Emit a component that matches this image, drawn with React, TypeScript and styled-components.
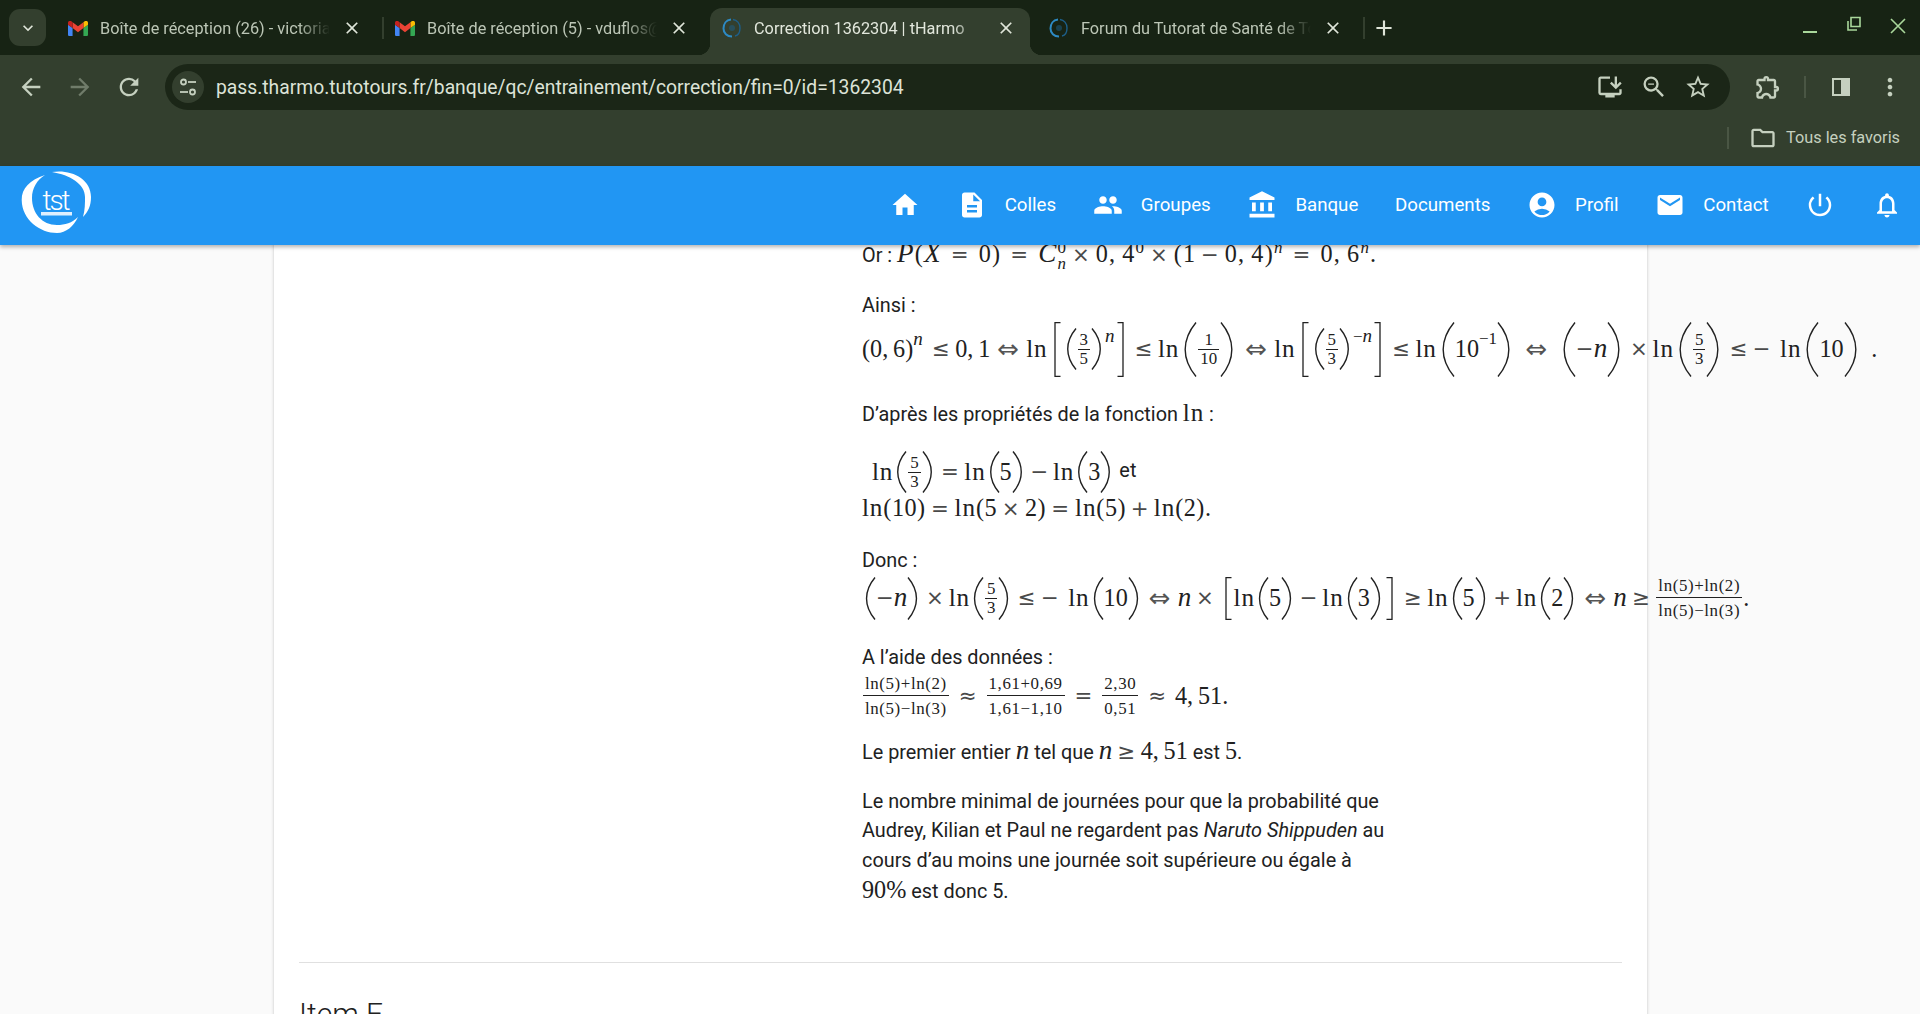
import React from "react";
import styled, { createGlobalStyle } from "styled-components";
import {
  MdAccountBalance,
  MdAccountCircle,
  MdAdd,
  MdArrowBack,
  MdArrowForward,
  MdClose,
  MdDescription,
  MdEmail,
  MdExpandMore,
  MdHome,
  MdInstallDesktop,
  MdMoreVert,
  MdNotificationsNone,
  MdOutlineExtension,
  MdOutlineFolder,
  MdPeople,
  MdPowerSettingsNew,
  MdRefresh,
  MdStarBorder,
  MdZoomOut,
} from "react-icons/md";

const GlobalStyle = createGlobalStyle`
  html, body {
    margin: 0;
    padding: 0;
    height: 100%;
    overflow: hidden;
    font-family: Roboto, "Liberation Sans", sans-serif;
    color: #212121;
  }
`;

const Page = styled.div`
  display: flex;
  flex-direction: column;
  height: 1014px;
  overflow: hidden;
`;

/* ---------- browser chrome ---------- */

const TabStrip = styled.div`
  display: flex;
  align-items: flex-end;
  height: 55px;
  background: #172314;
  padding-left: 9px;
  color: #c6d0c0;
`;

const TabSearch = styled.div`
  display: flex;
  align-items: center;
  justify-content: center;
  width: 37px;
  height: 37px;
  margin: 0 10px 9px 0;
  border-radius: 11px;
  background: #333f2e;
  font-size: 20px;
  color: #e0e6da;
`;

const Tab = styled.div<{ $active?: boolean; $divider?: boolean }>`
  position: relative;
  display: flex;
  align-items: center;
  width: ${(p) => (p.$active ? 320 : 327)}px;
  height: 47px;
  margin-right: ${(p) => (p.$active ? 7 : 0)}px;
  padding: 0 ${(p) => (p.$active ? 14 : 21)}px 7px 12px;
  box-sizing: border-box;
  border-radius: 12px 12px 0 0;
  background: ${(p) => (p.$active ? "#333f2e" : "transparent")};
  color: ${(p) => (p.$active ? "#e2e7dc" : "#bcc6b6")};
  flex-shrink: 0;

  &::after {
    content: "";
    display: ${(p) => (p.$divider ? "block" : "none")};
    position: absolute;
    right: -1px;
    top: 9px;
    height: 22px;
    width: 2px;
    background: #333f2e;
  }

  ${(p) =>
    p.$active &&
    `
    &::before {
      content: "";
      position: absolute;
      left: -12px;
      bottom: 0;
      width: 12px;
      height: 12px;
      background: radial-gradient(circle at 0 0, transparent 12px, #333f2e 12.5px);
    }
    &::after {
      display: block;
      right: -12px;
      top: auto;
      bottom: 0;
      width: 12px;
      height: 12px;
      background: radial-gradient(circle at 100% 0, transparent 12px, #333f2e 12.5px);
    }
  `}
`;

const TabIcon = styled.span`
  display: flex;
  width: 20px;
  margin-right: 12px;
  flex-shrink: 0;
`;

const TabTitle = styled.span`
  flex: 1;
  font-size: 16.3px;
  white-space: nowrap;
  overflow: hidden;
  mask-image: linear-gradient(to right, #000 86%, transparent 100%);
`;

const TabClose = styled.span`
  display: flex;
  margin-left: 12px;
  font-size: 20px;
  color: #e0e6da;
`;

const NewTab = styled.span`
  display: flex;
  margin: 0 0 9px 7px;
  height: 37px;
  align-items: center;
  font-size: 26px;
  color: #dfe5d9;
`;

const WindowControls = styled.div`
  display: flex;
  margin: 0 14px 0 auto;
  align-self: flex-start;
  gap: 28px;
  padding-top: 16px;
  color: #a9d79b;
`;

const Toolbar = styled.div`
  display: flex;
  align-items: center;
  height: 62px;
  padding: 2px 0 0 14px;
  box-sizing: border-box;
  background: #333f2e;
  color: #c5d0bf;
`;

const NavButton = styled.span<{ $dim?: boolean }>`
  display: flex;
  justify-content: center;
  width: 34px;
  margin-right: 15px;
  font-size: 28px;
  color: ${(p) => (p.$dim ? "#707c6a" : "#c5d0bf")};
`;

const Omnibox = styled.div`
  display: flex;
  align-items: center;
  width: 1565px;
  height: 46px;
  margin-left: 4px;
  padding: 0 10px 0 2px;
  box-sizing: border-box;
  border-radius: 23px;
  background: #1b2617;
`;

const SiteInfo = styled.span`
  display: flex;
  align-items: center;
  justify-content: center;
  width: 32px;
  height: 32px;
  margin: 0 12px 0 5px;
  border-radius: 50%;
  background: #333f2e;
`;

const Url = styled.span`
  flex: 1;
  font-size: 19.3px;
  color: #dde3d7;
`;

const OmniAction = styled.span`
  display: flex;
  justify-content: center;
  width: 44px;
  font-size: 28px;
  color: #c5d0bf;
`;

const ToolButton = styled.span<{ $left: number }>`
  display: flex;
  justify-content: center;
  margin-left: ${(p) => p.$left}px;
  font-size: 28px;
  color: #c5d0bf;
`;

const ToolDivider = styled.span<{ $left?: number }>`
  width: 2px;
  height: 22px;
  margin-left: ${(p) => p.$left ?? 0}px;
  background: #4a5644;
`;

const BookmarkBar = styled.div`
  display: flex;
  align-items: center;
  justify-content: flex-end;
  height: 49px;
  padding: 0 20px 8px 0;
  box-sizing: border-box;
  background: #333f2e;
  color: #c5d0bf;
  font-size: 16.3px;
`;

const FolderIcon = styled.span`
  display: flex;
  margin: 0 9px 0 20px;
  font-size: 28px;
`;

/* ---------- site header ---------- */

const AppBar = styled.header`
  position: relative;
  z-index: 2;
  display: flex;
  align-items: center;
  height: 79px;
  flex-shrink: 0;
  padding: 0 18px 2px 20px;
  box-sizing: border-box;
  background: #2196f3;
  color: #fff;
  box-shadow: 0 2px 4px rgba(0, 0, 0, 0.3);
`;

const Logo = styled.svg`
  display: block;
  margin-top: -5px;
`;

const NavList = styled.nav`
  display: flex;
  align-items: center;
  gap: 36.7px;
  margin-left: auto;
`;

const NavItem = styled.a`
  display: flex;
  align-items: center;
  gap: 18px;
  font-size: 18.7px;
  color: #fff;

  svg {
    display: block;
    width: 30px;
    height: 30px;
  }
`;

/* ---------- page content ---------- */

const Viewport = styled.main`
  flex: 1;
  overflow: hidden;
  background: #fafafa;
`;

const Card = styled.div`
  width: 1373px;
  margin-left: 274px;
  padding: 0 25px;
  box-sizing: border-box;
  background: #fff;
  box-shadow: 0 0 3px rgba(0, 0, 0, 0.22);
`;

const Answer = styled.div`
  display: flex;
  flex-direction: column;
  width: 530px;
  margin-left: 563px;
  margin-top: -7px;
  font-size: 19.85px;
`;

const Para = styled.div<{ $top?: number }>`
  margin-top: ${(p) => p.$top ?? 0}px;
  line-height: 29.6px;
`;

const Line = styled.div<{ $indent?: number }>`
  line-height: 30px;
  white-space: nowrap;
  padding-left: ${(p) => p.$indent ?? 0}px;
`;

const Divider = styled.hr`
  margin: 55.5px 0 0;
  border: 0;
  border-top: 1px solid #e0e0e0;
`;

const ItemTitle = styled.h2`
  margin: 33px 0 0;
  font-size: 30px;
  font-weight: 300;
  line-height: 36px;
  color: #212121;
`;

/* ---------- maths ---------- */

const Inline = styled.span<{ $track?: number }>`
  font-family: "Liberation Serif", "DejaVu Serif", serif;
  font-size: 24.2px;
  letter-spacing: ${(p) => p.$track ?? 0}px;
  white-space: nowrap;
`;

const Display = styled.div<{ $h: number }>`
  display: flex;
  align-items: center;
  height: ${(p) => p.$h}px;
  font-family: "Liberation Serif", "DejaVu Serif", serif;
  font-size: 24.2px;
  line-height: 1;
  white-space: nowrap;
`;

const Group = styled.span`
  display: inline-flex;
  align-items: center;
  font-family: "Liberation Serif", "DejaVu Serif", serif;
  font-size: 24.2px;
  line-height: 1;
  vertical-align: middle;
`;

const Ln = styled.span`
  font-size: 1.04em;
  letter-spacing: 0.035em;
`;

const V = styled.i`
  font-size: 1.12em;
`;

const Rel = styled.span<{ $space?: number }>`
  margin: 0 ${(p) => p.$space ?? 0.25}em;
  font-family: "DejaVu Sans", sans-serif;
  font-size: 0.88em;
  color: #4a4a4a;
`;

const Bin = styled.span`
  margin: 0 0.222em;
  font-family: "DejaVu Sans", sans-serif;
  font-size: 0.88em;
  color: #4a4a4a;
`;

const Unary = styled.span`
  font-family: "DejaVu Sans", sans-serif;
  font-size: 0.88em;
  color: #4a4a4a;
`;

const Arrow = styled.span<{ $wide?: boolean }>`
  margin: 0 ${(p) => (p.$wide ? "0.4em" : "0.27em")};
  font-family: "DejaVu Sans", sans-serif;
  font-size: 1.08em;
  color: #555;
`;

const Period = styled.span`
  margin-left: 0.4em;
`;

const Sup = styled.span<{ $lift?: number; $gap?: number }>`
  font-size: 0.7em;
  margin-bottom: ${(p) => p.$lift ?? 20}px;
  margin-right: ${(p) => p.$gap ?? 0}px;
`;

const InlineSup = styled.sup`
  font-size: 0.7em;
  line-height: 0;
`;

const Stack = styled.span`
  display: inline-flex;
  flex-direction: column;
  vertical-align: middle;
  font-size: 0.7em;
  line-height: 0.95;
`;

const Frac = styled.span<{ $loose?: boolean }>`
  display: inline-flex;
  flex-direction: column;
  align-items: stretch;
  margin: 0 1px;
  text-align: center;
  font-size: 16.9px;
  letter-spacing: ${(p) => (p.$loose ? "0.6px" : "0")};
  line-height: ${(p) => (p.$loose ? "19px" : "16px")};
`;

const FracTop = styled.span<{ $loose?: boolean }>`
  padding: 0 2px ${(p) => (p.$loose ? "2px" : "1px")};
  border-bottom: 1px solid #212121;
`;

const FracBottom = styled.span<{ $loose?: boolean }>`
  padding: ${(p) => (p.$loose ? "3px" : "1px")} 2px 0;
`;

const DelimSvg = styled.svg<{ $flip?: boolean }>`
  display: block;
  flex-shrink: 0;
  transform: ${(p) => (p.$flip ? "scaleX(-1)" : "none")};
`;

function Paren({ h, close }: { h: number; close?: boolean }) {
  const w = Math.round(h * 0.33);
  const inner = h * 0.24;
  const x0 = w - 1;
  const xm = x0 - inner * 0.82;
  return (
    <DelimSvg $flip={close} width={w} height={h} viewBox={`0 0 ${w} ${h}`}>
      <path
        d={`M${x0} 0.5 C${xm + inner * 0.16} ${h * 0.2} ${xm} ${h * 0.36} ${xm} ${h / 2} C${xm} ${h * 0.64} ${xm + inner * 0.16} ${h * 0.8} ${x0} ${h - 0.5}`}
        fill="none"
        stroke="#212121"
        strokeWidth="1.4"
      />
    </DelimSvg>
  );
}

function Bracket({ h, close }: { h: number; close?: boolean }) {
  return (
    <DelimSvg $flip={close} width={15} height={h} viewBox={`0 0 15 ${h}`}>
      <path d={`M12.5 0.7 H7 V${h - 0.7} H12.5`} fill="none" stroke="#212121" strokeWidth="1.3" />
    </DelimSvg>
  );
}

function Fraction({ top, bottom, loose }: { top: React.ReactNode; bottom: React.ReactNode; loose?: boolean }) {
  return (
    <Frac $loose={loose}>
      <FracTop $loose={loose}>{top}</FracTop>
      <FracBottom $loose={loose}>{bottom}</FracBottom>
    </Frac>
  );
}

/* ---------- small drawings ---------- */

function Gmail() {
  return (
    <svg width="20" height="15" viewBox="0 0 24 18">
      <path fill="#4285f4" d="M1.6 18H5.5V8.5L0 4.4V16.4C0 17.3.7 18 1.6 18z" />
      <path fill="#34a853" d="M18.5 18h3.9c.9 0 1.6-.7 1.6-1.6V4.4l-5.5 4.1z" />
      <path fill="#fbbc04" d="M18.5 1.4v7.1L24 4.4V2.2c0-2-2.3-3.2-3.9-2z" />
      <path fill="#ea4335" d="M5.5 8.5V1.4L12 6.3l6.5-4.9v7.1L12 13.4z" />
      <path fill="#c5221f" d="M0 2.2v2.2l5.5 4.1V1.4L3.9.2C2.3-1 0 .2 0 2.2z" />
    </svg>
  );
}

function TutoFavicon() {
  return (
    <svg width="20" height="20" viewBox="0 0 20 20" fill="none">
      <path d="M9 1.5C4 2 1.5 6 1.5 10.5S5 18.5 10 18.5" stroke="#2d8ac4" strokeWidth="2" />
      <path d="M11 1.5c4 .4 7 3.800 7 8.500s-2.500 7.500-5 8" stroke="#1d5f8a" strokeWidth="1.4" />
      <circle cx="10" cy="10" r="3" fill="#1d5f8a" opacity="0.5" />
    </svg>
  );
}

function TuneIcon() {
  return (
    <svg width="20" height="20" viewBox="0 0 20 20" fill="none" stroke="#c5d0bf" strokeWidth="1.8">
      <circle cx="5.500" cy="5" r="2.500" />
      <path d="M10 5h8" />
      <circle cx="14.500" cy="15" r="2.500" />
      <path d="M2 15h8" />
    </svg>
  );
}

function SidePanelIcon() {
  return (
    <svg width="20" height="20" viewBox="0 0 20 20">
      <path fill="#c5d0bf" fillRule="evenodd" d="M1 1h18v18H1zM3 3v14h7V3z" />
    </svg>
  );
}

function WindowMin() {
  return (
    <svg width="16" height="20" viewBox="0 0 16 20">
      <path d="M1 16h14" stroke="currentColor" strokeWidth="2" />
    </svg>
  );
}

function WindowRestore() {
  return (
    <svg width="16" height="20" viewBox="0 0 16 20" fill="none" stroke="currentColor" strokeWidth="1.6">
      <path d="M5 1.500h9v9H5z" />
      <path d="M2 5v9h9" />
    </svg>
  );
}

function WindowClose() {
  return (
    <svg width="16" height="20" viewBox="0 0 16 20" fill="none" stroke="currentColor" strokeWidth="1.6">
      <path d="M1 3l14 14M15 3L1 17" />
    </svg>
  );
}

function TstLogo() {
  return (
    <Logo width="72" height="64" viewBox="0 0 72 64">
      <path fill="#fff" d="M25 5C10 10 1.500 18 1.700 30 2 50 20 63 37 63 46 63 54 56 58 47 52 53 45 55 37 55 22 55 12 43 12 28 12 18 17 10 25 5z" />
      <path fill="#fff" d="M32 2C50-1 71 8 71 27 71 36 68 42 63 47 65 40 65 33 65 27 65 14 50 5 32 2z" />
      <text x="35.500" y="40" textAnchor="middle" fill="#fff" fontFamily="Roboto, sans-serif" fontWeight="300" fontSize="28" letterSpacing="-2">
        tst
      </text>
      <rect x="21" y="42" width="31" height="3.500" fill="#fff" opacity="0.85" />
    </Logo>
  );
}

const tabs = [
  { title: "Boîte de réception (26) - victoria.duflos", icon: <Gmail />, divider: true },
  { title: "Boîte de réception (5) - vduflos@gmail", icon: <Gmail /> },
  { title: "Correction 1362304 | tHarmo", icon: <TutoFavicon />, active: true },
  { title: "Forum du Tutorat de Santé de Tours", icon: <TutoFavicon />, divider: true },
];

const navItems = [
  { label: "", icon: <MdHome /> },
  { label: "Colles", icon: <MdDescription /> },
  { label: "Groupes", icon: <MdPeople /> },
  { label: "Banque", icon: <MdAccountBalance /> },
  { label: "Documents" },
  { label: "Profil", icon: <MdAccountCircle /> },
  { label: "Contact", icon: <MdEmail /> },
  { label: "", icon: <MdPowerSettingsNew /> },
  { label: "", icon: <MdNotificationsNone /> },
];

// decimal comma as KaTeX sets it, with a thin space after it
const dec = (a: string, b: string) => `${a},\u2009${b}`;

const ln = <Ln>ln</Ln>;

export default function App() {
  return (
    <Page>
      <GlobalStyle />
      <TabStrip>
        <TabSearch>
          <MdExpandMore />
        </TabSearch>
        {tabs.map((t) => (
          <Tab key={t.title} $active={t.active} $divider={t.divider}>
            <TabIcon>{t.icon}</TabIcon>
            <TabTitle>{t.title}</TabTitle>
            <TabClose>
              <MdClose />
            </TabClose>
          </Tab>
        ))}
        <NewTab>
          <MdAdd />
        </NewTab>
        <WindowControls>
          <WindowMin />
          <WindowRestore />
          <WindowClose />
        </WindowControls>
      </TabStrip>

      <Toolbar>
        <NavButton>
          <MdArrowBack />
        </NavButton>
        <NavButton $dim>
          <MdArrowForward />
        </NavButton>
        <NavButton>
          <MdRefresh />
        </NavButton>
        <Omnibox>
          <SiteInfo>
            <TuneIcon />
          </SiteInfo>
          <Url>pass.tharmo.tutotours.fr/banque/qc/entrainement/correction/fin=0/id=1362304</Url>
          <OmniAction>
            <MdInstallDesktop />
          </OmniAction>
          <OmniAction>
            <MdZoomOut />
          </OmniAction>
          <OmniAction>
            <MdStarBorder />
          </OmniAction>
        </Omnibox>
        <ToolButton $left={24}>
          <MdOutlineExtension />
        </ToolButton>
        <ToolDivider $left={22} />
        <ToolButton $left={25}>
          <SidePanelIcon />
        </ToolButton>
        <ToolButton $left={25}>
          <MdMoreVert />
        </ToolButton>
      </Toolbar>

      <BookmarkBar>
        <ToolDivider />
        <FolderIcon>
          <MdOutlineFolder />
        </FolderIcon>
        Tous les favoris
      </BookmarkBar>

      <AppBar>
        <TstLogo />
        <NavList>
          {navItems.map((n, i) => (
            <NavItem key={i}>
              {n.icon}
              {n.label && <span>{n.label}</span>}
            </NavItem>
          ))}
        </NavList>
      </AppBar>

      <Viewport>
        <Card>
          <Answer>
            <Para>
              <Line>
                Or :{" "}
                <Inline $track={1.2}>
                  <V>P</V>(<V>X</V>
                  <Rel $space={0.42}>=</Rel>0)<Rel $space={0.42}>=</Rel>
                  <V>C</V>
                  <Stack>
                    <span>0</span>
                    <i>n</i>
                  </Stack>
                  <Bin>×</Bin>
                  {dec("0", "4")}
                  <InlineSup>0</InlineSup>
                  <Bin>×</Bin>(1<Bin>−</Bin>
                  {dec("0", "4")})<InlineSup><i>n</i></InlineSup>
                  <Rel $space={0.42}>=</Rel>
                  {dec("0", "6")}
                  <InlineSup><i>n</i></InlineSup>.
                </Inline>
              </Line>
            </Para>

            <Para $top={18.5}>
              <Line>Ainsi :</Line>
              <Display $h={56}>
                ({dec("0", "6")})<Sup $gap={4}><V>n</V></Sup>
                <Rel>≤</Rel>
                {dec("0", "1")}
                <Arrow>⇔</Arrow>
                {ln}
                <Bracket h={55} />
                <Paren h={42} />
                <Fraction top="3" bottom="5" />
                <Paren h={42} close />
                <Sup $lift={26}><V>n</V></Sup>
                <Bracket h={55} close />
                <Rel>≤</Rel>
                {ln}
                <Paren h={55} />
                <Fraction top="1" bottom="10" />
                <Paren h={55} close />
                <Arrow>⇔</Arrow>
                {ln}
                <Bracket h={55} />
                <Paren h={42} />
                <Fraction top="5" bottom="3" />
                <Paren h={42} close />
                <Sup $lift={26}>−<V>n</V></Sup>
                <Bracket h={55} close />
                <Rel>≤</Rel>
                {ln}
                <Paren h={55} />
                10<Sup>−1</Sup>
                <Paren h={55} close />
                <Arrow $wide>⇔</Arrow>
                <Paren h={55} />
                <Unary>−</Unary>
                <V>n</V>
                <Paren h={55} close />
                <Bin>×</Bin>
                {ln}
                <Paren h={55} />
                <Fraction top="5" bottom="3" />
                <Paren h={55} close />
                <Rel>≤</Rel>
                <Unary>−</Unary>
                <Bin />
                {ln}
                <Paren h={55} />
                10
                <Paren h={55} close />
                <Period>.</Period>
              </Display>
            </Para>

            <Para $top={21}>
              <Line>
                D’après les propriétés de la fonction <Inline>{ln}</Inline> :
              </Line>
            </Para>

            <Para $top={21}>
              <Line $indent={10}>
                <Group>
                  {ln}
                  <Paren h={42} />
                  <Fraction top="5" bottom="3" />
                  <Paren h={42} close />
                  <Rel>=</Rel>
                  {ln}
                  <Paren h={42} />5<Paren h={42} close />
                  <Bin>−</Bin>
                  {ln}
                  <Paren h={42} />3<Paren h={42} close />
                </Group>{" "}
                et
              </Line>
              <Line>
                <Inline $track={0.5}>
                  {ln}(10)<Rel>=</Rel>
                  {ln}(5<Bin>×</Bin>2)<Rel>=</Rel>
                  {ln}(5)<Bin>+</Bin>
                  {ln}(2).
                </Inline>
              </Line>
            </Para>

            <Para $top={21}>
              <Line>Donc :</Line>
              <Display $h={44}>
                <Paren h={43} />
                <Unary>−</Unary>
                <V>n</V>
                <Paren h={43} close />
                <Bin>×</Bin>
                {ln}
                <Paren h={43} />
                <Fraction top="5" bottom="3" />
                <Paren h={43} close />
                <Rel>≤</Rel>
                <Unary>−</Unary>
                <Bin />
                {ln}
                <Paren h={43} />
                10
                <Paren h={43} close />
                <Arrow>⇔</Arrow>
                <V>n</V>
                <Bin>×</Bin>
                <Bracket h={43} />
                {ln}
                <Paren h={43} />5<Paren h={43} close />
                <Bin>−</Bin>
                {ln}
                <Paren h={43} />3<Paren h={43} close />
                <Bracket h={43} close />
                <Rel>≥</Rel>
                {ln}
                <Paren h={43} />5<Paren h={43} close />
                <Bin>+</Bin>
                {ln}
                <Paren h={43} />2<Paren h={43} close />
                <Arrow>⇔</Arrow>
                <V>n</V>
                <Rel>≥</Rel>
                <Fraction loose top="ln(5)+ln(2)" bottom="ln(5)−ln(3)" />
                <span>.</span>
              </Display>
            </Para>

            <Para $top={23}>
              <Line>A l’aide des données :</Line>
              <Display $h={46}>
                <Fraction loose top="ln(5)+ln(2)" bottom="ln(5)−ln(3)" />
                <Rel $space={0.42}>≈</Rel>
                <Fraction loose top="1,61+0,69" bottom="1,61−1,10" />
                <Rel $space={0.42}>=</Rel>
                <Fraction loose top="2,30" bottom="0,51" />
                <Rel $space={0.42}>≈</Rel>
                {dec("4", "51")}.
              </Display>
            </Para>

            <Para $top={15.5}>
              <Line>
                Le premier entier <Inline><V>n</V></Inline> tel que{" "}
                <Inline>
                  <V>n</V>
                  <Rel>≥</Rel>
                  {dec("4", "51")}
                </Inline>{" "}
                est <Inline>5</Inline>.
              </Line>
            </Para>

            <Para $top={19}>
              Le nombre minimal de journées pour que la probabilité que Audrey, Kilian et Paul ne
              regardent pas <i>Naruto Shippuden</i> au cours d’au moins une journée soit supérieure
              ou égale à <Inline>90%</Inline> est donc 5.
            </Para>
          </Answer>
          <Divider />
          <ItemTitle>Item F</ItemTitle>
        </Card>
      </Viewport>
    </Page>
  );
}
